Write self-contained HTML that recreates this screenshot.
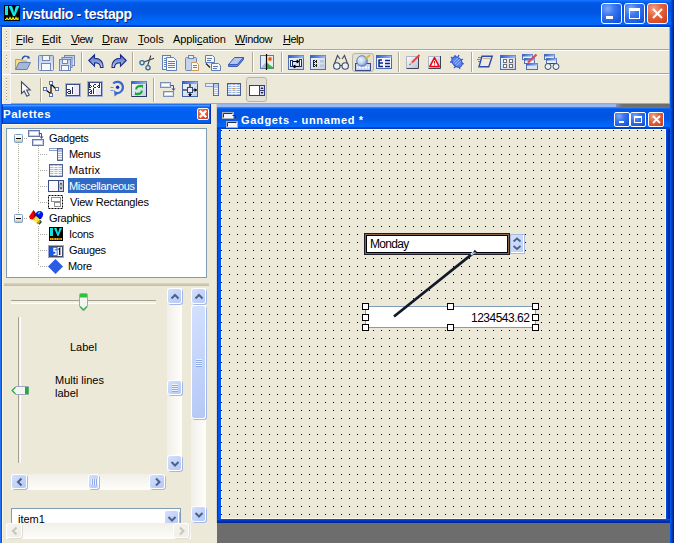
<!DOCTYPE html>
<html><head><meta charset="utf-8">
<style>
*{box-sizing:border-box}
html,body{margin:0;padding:0}
body{width:674px;height:543px;position:relative;overflow:hidden;background:#ECE9D8;font-family:"Liberation Sans",sans-serif;font-size:11px;color:#000}
.a{position:absolute}
svg.a{overflow:visible}
.t{position:absolute;white-space:pre;line-height:13px}
#title{left:0;top:0;width:674px;height:27px;background:linear-gradient(to bottom,#1C74FF 0px,#0A68FA 1.5px,#0058E6 3px,#0054DF 9px,#0056E3 13px,#0062F2 18px,#0068FC 22px,#0064F8 25px,#0044C8 25.5px,#0038B4 27px)}
#ttext{left:22px;top:8px;font-size:14px;letter-spacing:-0.34px;font-weight:bold;color:#fff;text-shadow:1px 1px 0 #0A1F80}
.xpbtn{position:absolute;top:3px;width:21px;height:21px;border:1px solid #fff;border-radius:3px;background:radial-gradient(circle at 30% 25%,#7FA9F8 0,#3A78F0 35%,#1A55E0 80%,#1648C8 100%)}
.xpclose{background:radial-gradient(circle at 30% 25%,#F2A08A 0,#E5633F 40%,#D0441E 85%,#B83A18 100%)}
#lb{left:0;top:26px;width:2px;height:517px;background:linear-gradient(to right,#2070F8 0,#2070F8 1px,#0054E4 1px)}
#rb{left:670px;top:26px;width:4px;height:517px;background:linear-gradient(to right,#0060F4 0,#0050E0 1px,#0038B8 2px,#00208A 4px)}
.grip{position:absolute;left:6px;width:2px;background:repeating-linear-gradient(to bottom,#A09C8C 0,#A09C8C 1px,#FFFFFF 1px,#FFFFFF 2px,transparent 2px,transparent 3px);background-size:1px 3px;background-repeat:repeat-y}
.hl{position:absolute;background:#fff}
.dk{position:absolute;background:#ACA899}
.menu{position:absolute;top:33px}
.menu u{text-decoration:underline;text-underline-offset:1px;text-decoration-thickness:1px}
.sep{position:absolute;width:2px;background:linear-gradient(to right,#ACA899 0,#ACA899 1px,#fff 1px,#fff 2px)}
#palhdr{left:2px;top:104px;width:209px;height:20px;background:linear-gradient(to bottom,#2070F0 0px,#2070F0 1px,#5AA4FF 1px,#3A8CFF 2px,#0A66F4 3px,#0060F0 8px,#005EF2 14px,#0062F8 18px,#0050E0 19px,#0040C8 20px)}
#tree{left:6px;top:128px;width:201px;height:150px;background:#fff;border:1px solid #7F9DB9}
#iw{left:217px;top:104px;width:453px;height:419px;background:linear-gradient(to right,#0038B8 0,#0038B8 1px,#0050E8 1px,#0058EE 4px,#0054EA 449px,#0040D0 450px,#0030B0 451px,#002494 453px)}
#canvas{left:221px;top:129px;width:445px;height:390px;background-color:#ECE9D8}
#mdigray{left:217px;top:523px;width:453px;height:20px;background:#6D6D6D}
.pbtn{position:absolute;background:#E3E1D7;border:1px solid #B9B5A5;border-radius:3px}
.sb{position:absolute;border:1px solid #fff;border-radius:3px;background:linear-gradient(135deg,#D4E0FE 0%,#C4D4FA 50%,#B4C8F6 100%);box-shadow:1px 1px 0 #A4B8E4}
.sbd{position:absolute;border:1px solid #fff;border-radius:3px;background:linear-gradient(135deg,#F4F3EE 0%,#EEEDE6 100%);box-shadow:1px 1px 0 #E0DDD2}
.trv{position:absolute;background:linear-gradient(to right,#F1EFE8,#FEFEFB)}
.trh{position:absolute;background:linear-gradient(to bottom,#F1EFE8,#FEFEFB)}
.sb svg,.sbd svg{position:absolute;left:0;top:0}
</style></head><body>
<div id="title" class="a"></div>
<svg class="a" style="left:4px;top:5px" width="16" height="16" viewBox="0 0 16 16">
 <rect width="16" height="16" fill="#000"/>
 <rect x="1" y="1" width="3" height="9" fill="#10E8E8"/>
 <path d="M5 1h2.5l1 1 1.5 6 1.5-6 1-1h2.5v1l-4 9h-2l-4-9z" fill="#10E8E8"/>
 <path d="M1 14.5h1l1-1.5 1 1.5h1l1-2 1 2h1l1-2 1 2h1l1-2 1 2h1v-2" stroke="#F0F000" stroke-width="1.2" fill="none"/>
</svg>
<div id="ttext" class="t">ivstudio - testapp</div>
<div class="xpbtn" style="left:601px"><div class="a" style="left:4px;top:12px;width:7px;height:3px;background:#fff"></div></div>
<div class="xpbtn" style="left:624px"><div class="a" style="left:4px;top:4px;width:11px;height:11px;border:1px solid #fff;border-top-width:3px"></div></div>
<div class="xpbtn xpclose" style="left:647px"><svg class="a" style="left:4px;top:4px" width="11" height="11"><path d="M1 1l9 9M10 1l-9 9" stroke="#fff" stroke-width="2.2"/></svg></div>
<div id="lb" class="a"></div>
<div class="a" style="left:2px;top:28px;width:1px;height:515px;background:#FFF4D8"></div>
<div id="rb" class="a"></div>
<div class="a" style="left:671px;top:0;width:3px;height:26px;background:linear-gradient(to right,#0050E0,#0030B0 2px,#0028A0)"></div>
<div class="hl" style="left:2px;top:27px;width:667px;height:1px;background:#FFFDF5"></div>
<div class="a" style="left:669px;top:27px;width:1px;height:77px;background:#B4B09E"></div>
<div class="grip" style="top:31px;height:17px"></div>
<div class="hl" style="left:10px;top:28px;width:1px;height:21px;background:#FAF8F0"></div>
<div class="dk" style="left:11px;top:49px;width:659px;height:1px"></div>
<div class="hl" style="left:2px;top:50px;width:667px;height:1px"></div>
<div class="menu t" style="left:16px"><u>F</u>ile</div>
<div class="menu t" style="left:42px"><u>E</u>dit</div>
<div class="menu t" style="left:71px;letter-spacing:-0.6px"><u>V</u>iew</div>
<div class="menu t" style="left:102px"><u>D</u>raw</div>
<div class="menu t" style="left:138px"><u>T</u>ools</div>
<div class="menu t" style="left:173px;letter-spacing:-0.1px">Appli<u>c</u>ation</div>
<div class="menu t" style="left:235px;letter-spacing:-0.35px"><u>W</u>indow</div>
<div class="menu t" style="left:283px;letter-spacing:-0.5px"><u>H</u>elp</div>
<div class="grip" style="top:55px;height:15px"></div>
<div class="hl" style="left:10px;top:51px;width:1px;height:22px;background:#FAF8F0"></div>
<div class="dk" style="left:11px;top:73px;width:659px;height:1px"></div>
<div class="hl" style="left:2px;top:74px;width:667px;height:1px"></div>
<div class="grip" style="top:78px;height:24px"></div>
<div class="hl" style="left:10px;top:75px;width:1px;height:28px;background:#FAF8F0"></div>
<div class="dk" style="left:11px;top:103px;width:659px;height:1px"></div>
<svg width="0" height="0" style="position:absolute"><defs>
<linearGradient id="gFl" x1="0" y1="0" x2="0" y2="1"><stop offset="0" stop-color="#B9C8E8"/><stop offset="1" stop-color="#EEF2FA"/></linearGradient>
<linearGradient id="gAr" x1="0" y1="0" x2="0" y2="1"><stop offset="0" stop-color="#3E62C8"/><stop offset="0.6" stop-color="#8FA4D8"/><stop offset="1" stop-color="#D8DCE4"/></linearGradient>
<linearGradient id="gTb" x1="0" y1="0" x2="1" y2="0"><stop offset="0" stop-color="#2E5FD0"/><stop offset="1" stop-color="#9CBAF4"/></linearGradient>
<linearGradient id="gBx" x1="0" y1="0" x2="1" y2="1"><stop offset="0" stop-color="#FFFFFF"/><stop offset="1" stop-color="#B4BED4"/></linearGradient>
<linearGradient id="gWb" x1="0" y1="0" x2="1" y2="1"><stop offset="0" stop-color="#F4F7FC"/><stop offset="1" stop-color="#C4D0E8"/></linearGradient>
<radialGradient id="gGl" cx="0.4" cy="0.4" r="0.6"><stop offset="0" stop-color="#F0F8FF"/><stop offset="0.6" stop-color="#B8D0F0"/><stop offset="1" stop-color="#7090D0"/></radialGradient>
</defs></svg>
<!-- open -->
<svg class="a" style="left:15px;top:54px" width="16" height="16">
 <path d="M7 5.5C8 2 11 1 13.5 3.5" stroke="#2850B0" stroke-width="1.4" fill="none"/>
 <path d="M12 4.5h3l-1.2-3z" fill="#2850B0"/>
 <path d="M0.5 15.5V5.5h5l1 1.5h5v2" fill="#F6DC82" stroke="#C8A048"/>
 <path d="M0.5 15.5L4 8.5h11.5l-3.5 7z" fill="#A4B6DA" stroke="#6880B4"/>
</svg>
<!-- save -->
<svg class="a" style="left:38px;top:55px" width="16" height="16">
 <rect x="0.5" y="0.5" width="15" height="15" rx="1" fill="url(#gFl)" stroke="#6E87B8"/>
 <rect x="4.5" y="0.5" width="7" height="5" fill="#F4F6FB" stroke="#6E87B8"/>
 <rect x="3.5" y="8.5" width="9" height="7" fill="#F8FAFD" stroke="#6E87B8"/>
</svg>
<!-- save all -->
<svg class="a" style="left:59px;top:55px" width="16" height="16">
 <rect x="5.5" y="0.5" width="10" height="10" fill="url(#gFl)" stroke="#7088B8"/>
 <rect x="3" y="2.5" width="10" height="10" fill="url(#gFl)" stroke="#7088B8"/>
 <rect x="0.5" y="4.5" width="11" height="11" fill="url(#gFl)" stroke="#6E87B8"/>
 <rect x="3.5" y="4.5" width="5" height="4" fill="#F4F6FB" stroke="#6E87B8"/>
 <rect x="2.5" y="10.5" width="7" height="5" fill="#F8FAFD" stroke="#6E87B8"/>
</svg>
<div class="sep" style="left:81px;top:52px;height:20px"></div>
<!-- undo -->
<svg class="a" style="left:88px;top:54px" width="16" height="16">
 <path d="M0.8 6.5L6.5 0.8V4.3C11.5 4.3 15.2 7 15 13.5H12.5C12.5 10.5 10.5 8.8 6.5 8.8V12.2Z" fill="url(#gAr)" stroke="#1A2A8A" stroke-width="1.1"/>
</svg>
<!-- redo -->
<svg class="a" style="left:111px;top:54px" width="16" height="16">
 <path d="M15.2 6.5L9.5 0.8V4.3C4.5 4.3 0.8 7 1 13.5H3.5C3.5 10.5 5.5 8.8 9.5 8.8V12.2Z" fill="url(#gAr)" stroke="#1A2A8A" stroke-width="1.1"/>
</svg>
<div class="sep" style="left:132px;top:52px;height:20px"></div>
<!-- cut -->
<svg class="a" style="left:139px;top:55px" width="16" height="16">
 <path d="M5 7L15 3.2M8.6 10.6L11.8 0.5" stroke="#3A3E52" stroke-width="1.1"/>
 <circle cx="3" cy="7.8" r="2.1" fill="none" stroke="#2C6A98" stroke-width="1.3"/>
 <circle cx="9" cy="12.8" r="2.1" fill="none" stroke="#2C6A98" stroke-width="1.3"/>
</svg>
<!-- copy -->
<svg class="a" style="left:162px;top:55px" width="16" height="16">
 <rect x="0.5" y="0.5" width="8" height="14" fill="#F2F5FB" stroke="#5E7EB8"/>
 <path d="M2 3.5h5M2 5.5h5M2 7.5h5M2 9.5h5M2 11.5h5" stroke="#6E87B8"/>
 <path d="M4.5 2.5h7l3 3v10h-10z" fill="#F8FAFD" stroke="#5E7EB8"/>
 <path d="M6 6.5h7M6 8.5h7M6 10.5h7M6 12.5h7" stroke="#5E7EB8"/>
</svg>
<!-- paste -->
<svg class="a" style="left:185px;top:55px" width="16" height="16">
 <rect x="0.5" y="2.5" width="11" height="13" rx="1" fill="#C9D3E8" stroke="#6E87B8"/>
 <rect x="3.5" y="0.5" width="5" height="3" fill="#E8ECF4" stroke="#6E87B8"/>
 <path d="M6.5 7.5h5l2 2v6h-7z" fill="#FBFCFE" stroke="#D09850"/>
 <path d="M8 10.5h4M8 12.5h4" stroke="#5E7EB8"/>
</svg>
<!-- paste special -->
<svg class="a" style="left:205px;top:55px" width="16" height="16">
 <path d="M0.5 0.5h7l2 2v5h-9z" fill="#F4F6FB" stroke="#5E7EB8"/>
 <path d="M2 3.5h5M2 5.5h4" stroke="#5E7EB8"/>
 <path d="M6.5 8.5h7l2 2v5h-9z" fill="#F4F6FB" stroke="#5E7EB8"/>
 <path d="M8 11.5h5M8 13.5h4" stroke="#5E7EB8"/>
 <path d="M1 8.5l4 4" stroke="#202020" stroke-width="1.2"/>
</svg>
<!-- eraser -->
<svg class="a" style="left:228px;top:55px" width="16" height="16">
 <path d="M0.5 9.5L6.5 2.5H15.5L9.5 9.5Z" fill="#B4C6F0" stroke="#3C5CB8"/>
 <path d="M0.5 9.5V11.5H9.5L15.5 4.5V2.5L9.5 9.5Z" fill="#6A8AD8" stroke="#3C5CB8"/>
</svg>
<div class="sep" style="left:252px;top:52px;height:20px"></div>
<!-- image -->
<svg class="a" style="left:259px;top:54px" width="16" height="16">
 <rect x="1.5" y="1.5" width="13" height="13" fill="#E6ECF8" stroke="#5F78A8"/>
 <path d="M2 14L6 9l4 3 4 2z" fill="#A8B8D8"/>
 <path d="M7.5 14.5V8L10 10.5 14.5 13.5V14.5Z" fill="#3CB43C"/>
 <circle cx="11" cy="5" r="2" fill="#F04830" stroke="#F8C040" stroke-width="0.8"/>
 <path d="M7.5 0V16" stroke="#000" stroke-width="1.2"/>
</svg>
<div class="sep" style="left:281px;top:52px;height:20px"></div>
<!-- window arrows -->
<svg class="a" style="left:288px;top:55px" width="16" height="16">
 <rect x="0.5" y="0.5" width="15" height="14" fill="url(#gWb)" stroke="#5070B0"/>
 <rect x="0.5" y="0.5" width="15" height="2.5" fill="url(#gTb)"/>
 <rect x="2.5" y="5.5" width="2" height="6" fill="#fff" stroke="#203070"/>
 <rect x="11.5" y="4.5" width="2" height="7" fill="#fff" stroke="#203070"/>
 <path d="M5 6.5h4M9 5v3l2-1.5zM11 11.5H7M7 10v3l-2-1.5z" stroke="#000" fill="#000" stroke-width="1"/>
</svg>
<!-- window grid -->
<svg class="a" style="left:310px;top:55px" width="16" height="16">
 <rect x="0.5" y="0.5" width="15" height="14" fill="url(#gWb)" stroke="#5070B0"/>
 <rect x="0.5" y="0.5" width="15" height="2.5" fill="url(#gTb)"/>
 <rect x="3" y="5" width="1" height="1" fill="#202020"/><rect x="3" y="7" width="1" height="1" fill="#202020"/><rect x="3" y="9" width="1" height="1" fill="#202020"/><rect x="3" y="11" width="1" height="1" fill="#202020"/><rect x="4" y="5" width="1" height="1" fill="#202020"/><rect x="4" y="7" width="1" height="1" fill="#202020"/><rect x="4" y="9" width="1" height="1" fill="#202020"/><rect x="4" y="11" width="1" height="1" fill="#202020"/><rect x="6" y="5" width="1" height="1" fill="#202020"/><rect x="6" y="7" width="1" height="1" fill="#202020"/><rect x="6" y="9" width="1" height="1" fill="#202020"/><rect x="6" y="11" width="1" height="1" fill="#202020"/><rect x="3" y="5" width="1" height="7" fill="#202020"/><rect x="5" y="6" width="2" height="1" fill="#202020"/><rect x="5" y="10" width="2" height="1" fill="#202020"/>
 <rect x="10" y="5" width="4" height="2.5" fill="#B8C4DC"/>
 <rect x="10" y="9.5" width="4" height="2.5" fill="#B8C4DC"/>
</svg>
<!-- binoculars -->
<svg class="a" style="left:333px;top:54px" width="16" height="16">
 <path d="M1 11L4.5 1.5 7 5M15 11L11.5 1.5 9 5M6 11.5h4" stroke="#404860" fill="none" stroke-width="1.1"/>
 <circle cx="3.8" cy="12" r="3.2" fill="#E4F4FA" stroke="#404860" stroke-width="1.1"/>
 <circle cx="12.2" cy="12" r="3.2" fill="#E4F4FA" stroke="#404860" stroke-width="1.1"/>
</svg>
<!-- globe pressed -->
<div class="pbtn" style="left:352px;top:53px;width:22px;height:19px"></div>
<svg class="a" style="left:355px;top:55px" width="16" height="16">
 <rect x="0.5" y="8.5" width="15" height="7" fill="#C6D2EC" stroke="#3A4A88"/>
 <path d="M2 12.5h1M4 12.5h2M7 12.5h2M10 12.5h2M13 12.5h1" stroke="#fff" stroke-width="2"/>
 <circle cx="7" cy="6" r="5.3" fill="url(#gGl)" stroke="#6680B8"/>
 <path d="M11 3.5l4-3.5" stroke="#E8B820" stroke-width="2"/>
</svg>
<!-- list window -->
<svg class="a" style="left:376px;top:55px" width="16" height="16">
 <rect x="0.5" y="0.5" width="15" height="13" fill="#F4F7FC" stroke="#4868B0"/>
 <rect x="0.5" y="0.5" width="15" height="2.5" fill="url(#gTb)"/>
 <path d="M3 4.5v7h4M3 8h4M3 5h3M9 5.5h5M9 8.5h5M9 11.5h5" stroke="#10208C" stroke-width="1.5" fill="none"/>
</svg>
<div class="sep" style="left:398px;top:52px;height:20px"></div>
<!-- pencil box -->
<svg class="a" style="left:406px;top:56px" width="16" height="16">
 <rect x="0.5" y="0.5" width="12" height="12" fill="url(#gBx)"/>
 <path d="M0.5 12V0.5H12" stroke="#B0B6C6" fill="none"/>
 <path d="M0.5 12.5H12.5V0" stroke="#3A4258" fill="none"/>
 <path d="M6 6.5L13.5 -1" stroke="#F04040" stroke-width="2"/>
 <path d="M4.2 8.3l1.4-1.4" stroke="#E0B060" stroke-width="1.6"/>
 <path d="M3.6 8.9l0.6-0.6" stroke="#602020" stroke-width="1.2"/>
</svg>
<!-- warning -->
<svg class="a" style="left:428px;top:56px" width="16" height="16">
 <rect x="0.5" y="0.5" width="12" height="12" fill="url(#gBx)"/>
 <path d="M0.5 12V0.5H12" stroke="#B0B6C6" fill="none"/>
 <path d="M0.5 12.5H12.5V0" stroke="#3A4258" fill="none"/>
 <path d="M6.5 1.6L11.2 10.6H1.8Z" fill="#fff" stroke="#F00010" stroke-width="1.5" stroke-linejoin="round"/>
 <path d="M6.5 5v2.6" stroke="#F00010" stroke-width="1"/>
 <rect x="6" y="8.4" width="1" height="1" fill="#F00010"/>
</svg>
<!-- bug -->
<svg class="a" style="left:449px;top:54px" width="16" height="16">
 <path d="M2 3l2 2M1 8h3M5 14l2-2M10 1l-1 2M14 5l-2 1M15 10l-3-1M11 15l-1-3M6 1v3" stroke="#2A58D8" stroke-width="1.3"/>
 <ellipse cx="8" cy="8" rx="6" ry="4.3" transform="rotate(45 8 8)" fill="#5C84EC" stroke="#2A50C8"/>
 <path d="M4.5 8.5l5-5M6 10l5-5M7.5 11.5l4-4" stroke="#A8C0F8" stroke-width="0.8"/>
</svg>
<div class="sep" style="left:471px;top:52px;height:20px"></div>
<!-- skew doc -->
<svg class="a" style="left:477px;top:54px" width="16" height="16">
 <path d="M1 3.5h3M0 5.5h3M1 7.5h2" stroke="#707890" stroke-width="0.9"/>
 <path d="M5 2.2H15.2L11.8 12.8H2Z" fill="#F2ECDC" stroke="#2A4CB0" stroke-width="1.4"/>
 <path d="M6 4.5h7" stroke="#C8B090" stroke-width="1"/>
</svg>
<!-- grid window -->
<svg class="a" style="left:500px;top:55px" width="16" height="16">
 <rect x="0.5" y="0.5" width="15" height="14" fill="url(#gWb)" stroke="#5070B0"/>
 <rect x="0.5" y="0.5" width="15" height="2.5" fill="url(#gTb)"/>
 <rect x="3.5" y="4.5" width="3" height="3" fill="#fff" stroke="#707070"/>
 <rect x="9.5" y="4.5" width="3" height="3" fill="#fff" stroke="#707070"/>
 <rect x="3.5" y="9.5" width="3" height="3" fill="#fff" stroke="#707070"/>
 <rect x="9.5" y="9.5" width="3" height="3" fill="#fff" stroke="#707070"/>
</svg>
<!-- stack pencil -->
<svg class="a" style="left:522px;top:54px" width="16" height="16">
 <rect x="0.5" y="0.5" width="10" height="5" fill="#E8EEF8" stroke="#5070B0"/><rect x="0.5" y="0.5" width="10" height="2" fill="url(#gTb)"/>
 <rect x="2.5" y="4.5" width="10" height="5" fill="#E8EEF8" stroke="#5070B0"/><rect x="2.5" y="4.5" width="10" height="2" fill="url(#gTb)"/>
 <rect x="4.5" y="9.5" width="11" height="6" fill="#DCE4F2" stroke="#5070B0"/><rect x="4.5" y="9.5" width="11" height="2" fill="url(#gTb)"/>
 <path d="M6 8.5L14.5 0.5" stroke="#E84848" stroke-width="2.4"/>
</svg>
<!-- stack binoculars -->
<svg class="a" style="left:544px;top:54px" width="16" height="16">
 <rect x="0.5" y="0.5" width="10" height="5" fill="#E8EEF8" stroke="#5070B0"/><rect x="0.5" y="0.5" width="10" height="2" fill="url(#gTb)"/>
 <rect x="2.5" y="4.5" width="10" height="5" fill="#E8EEF8" stroke="#5070B0"/><rect x="2.5" y="4.5" width="10" height="2" fill="url(#gTb)"/>
 <path d="M5 9.5h6" stroke="#404860"/>
 <circle cx="4" cy="12.5" r="3" fill="#E4F4FA" stroke="#404860"/>
 <circle cx="12" cy="12.5" r="3" fill="#E4F4FA" stroke="#404860"/>
</svg>
<!-- arrow -->
<svg class="a" style="left:20px;top:81px" width="16" height="16">
 <path d="M1.5 0.8V12.5L4.2 10L6.8 15.2L9.2 14L6.6 9H10.2Z" fill="#fff" stroke="#404C6C" stroke-width="1.1"/>
</svg>
<div class="sep" style="left:40px;top:78px;height:24px"></div>
<!-- node -->
<svg class="a" style="left:43px;top:81px" width="16" height="16">
 <path d="M8 3v10M3 9l5 4M8 3l5 5" stroke="#000" stroke-width="1.2"/>
 <rect x="6.5" y="0.5" width="3" height="3" fill="#fff" stroke="#5870B0"/>
 <rect x="0.5" y="6.5" width="3" height="3" fill="#fff" stroke="#5870B0"/>
 <rect x="12.5" y="6.5" width="3" height="3" fill="#fff" stroke="#5870B0"/>
 <rect x="6.5" y="12.5" width="3" height="3" fill="#fff" stroke="#5870B0"/>
</svg>
<!-- al -->
<svg class="a" style="left:65px;top:83px" width="16" height="16"><rect x="0.5" y="0.5" width="15" height="13" fill="#E8ECF6" stroke="#A4B2D2"/><rect x="1.5" y="1.5" width="13" height="11" fill="#FCFCFF" stroke="#3C4C84"/><rect x="9" y="2" width="5" height="10" fill="#ECE8F8"/><rect x="2" y="6" width="1" height="1" fill="#243054"/><rect x="3" y="6" width="1" height="1" fill="#243054"/><rect x="4" y="6" width="1" height="1" fill="#243054"/><rect x="5" y="7" width="1" height="1" fill="#243054"/><rect x="3" y="8" width="1" height="1" fill="#243054"/><rect x="4" y="8" width="1" height="1" fill="#243054"/><rect x="5" y="8" width="1" height="1" fill="#243054"/><rect x="2" y="9" width="1" height="1" fill="#243054"/><rect x="5" y="9" width="1" height="1" fill="#243054"/><rect x="3" y="10" width="1" height="1" fill="#243054"/><rect x="4" y="10" width="1" height="1" fill="#243054"/><rect x="5" y="10" width="1" height="1" fill="#243054"/><rect x="7" y="4" width="1" height="1" fill="#243054"/><rect x="7" y="5" width="1" height="1" fill="#243054"/><rect x="7" y="6" width="1" height="1" fill="#243054"/><rect x="7" y="7" width="1" height="1" fill="#243054"/><rect x="7" y="8" width="1" height="1" fill="#243054"/><rect x="7" y="9" width="1" height="1" fill="#243054"/><rect x="7" y="10" width="1" height="1" fill="#243054"/></svg>
<!-- abc al -->
<svg class="a" style="left:87px;top:81px" width="16" height="16"><rect x="0.5" y="0.5" width="15" height="15" fill="#E8ECF6" stroke="#A4B2D2"/><rect x="1.5" y="1.5" width="13" height="13" fill="#FCFCFF" stroke="#3C4C84"/><rect x="9" y="8" width="5" height="6" fill="#ECE8F8"/><rect x="2" y="2" width="1" height="1" fill="#243054"/><rect x="2" y="3" width="1" height="1" fill="#243054"/><rect x="2" y="4" width="1" height="1" fill="#243054"/><rect x="3" y="4" width="1" height="1" fill="#243054"/><rect x="2" y="5" width="1" height="1" fill="#243054"/><rect x="4" y="5" width="1" height="1" fill="#243054"/><rect x="2" y="6" width="1" height="1" fill="#243054"/><rect x="3" y="6" width="1" height="1" fill="#243054"/><rect x="7" y="3" width="1" height="1" fill="#243054"/><rect x="8" y="3" width="1" height="1" fill="#243054"/><rect x="6" y="4" width="1" height="1" fill="#243054"/><rect x="6" y="5" width="1" height="1" fill="#243054"/><rect x="7" y="6" width="1" height="1" fill="#243054"/><rect x="8" y="6" width="1" height="1" fill="#243054"/><rect x="12" y="2" width="1" height="1" fill="#243054"/><rect x="12" y="3" width="1" height="1" fill="#243054"/><rect x="11" y="4" width="1" height="1" fill="#243054"/><rect x="12" y="4" width="1" height="1" fill="#243054"/><rect x="10" y="5" width="1" height="1" fill="#243054"/><rect x="12" y="5" width="1" height="1" fill="#243054"/><rect x="11" y="6" width="1" height="1" fill="#243054"/><rect x="12" y="6" width="1" height="1" fill="#243054"/><rect x="2" y="8" width="1" height="1" fill="#243054"/><rect x="3" y="8" width="1" height="1" fill="#243054"/><rect x="4" y="9" width="1" height="1" fill="#243054"/><rect x="3" y="10" width="1" height="1" fill="#243054"/><rect x="4" y="10" width="1" height="1" fill="#243054"/><rect x="2" y="11" width="1" height="1" fill="#243054"/><rect x="4" y="11" width="1" height="1" fill="#243054"/><rect x="3" y="12" width="1" height="1" fill="#243054"/><rect x="4" y="12" width="1" height="1" fill="#243054"/><rect x="6" y="7" width="1" height="1" fill="#243054"/><rect x="6" y="8" width="1" height="1" fill="#243054"/><rect x="6" y="9" width="1" height="1" fill="#243054"/><rect x="6" y="10" width="1" height="1" fill="#243054"/><rect x="6" y="11" width="1" height="1" fill="#243054"/><rect x="6" y="12" width="1" height="1" fill="#243054"/></svg>
<!-- rotate -->
<svg class="a" style="left:109px;top:81px" width="16" height="16">
 <path d="M4.2 2.6A5.6 5.6 0 1 1 7.2 11.9" stroke="#3868D8" stroke-width="2.2" fill="none"/>
 <path d="M5 9.2L9.2 12.6 5.6 15.6z" fill="#3868D8"/>
 <circle cx="8.6" cy="6.2" r="1.7" fill="#1C3090"/>
 <path d="M1.5 6.5h3M1.5 9.5h3" stroke="#6A90E0" stroke-width="1"/>
</svg>
<!-- refresh window -->
<svg class="a" style="left:131px;top:81px" width="16" height="16">
 <rect x="0.5" y="0.5" width="15" height="15" fill="url(#gWb)" stroke="#5070B0"/>
 <path d="M15.5 1v15M1 15.5h15" stroke="#283868"/>
 <rect x="0.5" y="0.5" width="15" height="2.5" fill="url(#gTb)"/>
 <path d="M5.2 8.5A3.2 3.2 0 0 1 10 5.6" stroke="#10A820" stroke-width="2" fill="none"/>
 <path d="M8.8 3.8L12.2 4 11.6 7.6z" fill="#10A820"/>
 <path d="M10.8 9.5A3.2 3.2 0 0 1 6 12.4" stroke="#10A820" stroke-width="2" fill="none"/>
 <path d="M7.2 14.2L3.8 14 4.4 10.4z" fill="#10A820"/>
</svg>
<div class="sep" style="left:153px;top:78px;height:24px"></div>
<!-- gadget -->
<svg class="a" style="left:160px;top:81px" width="16" height="16">
 <rect x="0.5" y="1.5" width="10" height="5" fill="#F2F5FB" stroke="#7A90B8" stroke-width="1"/>
 <rect x="1.5" y="2.5" width="8" height="3" fill="#fff" stroke="#B8C4DC" stroke-width="0.6"/>
 <rect x="3.5" y="10.5" width="10" height="5" fill="#F2F5FB" stroke="#7A90B8"/>
 <rect x="4.5" y="11.5" width="8" height="3" fill="#fff" stroke="#B8C4DC" stroke-width="0.6"/>
 <path d="M10.5 4.5h3v4" stroke="#44506C" fill="none"/>
 <path d="M11.5 7.5h4l-2 2.5z" fill="#3858A8"/>
</svg>
<!-- crosshair window -->
<svg class="a" style="left:182px;top:81px" width="16" height="16">
 <rect x="0.5" y="0.5" width="15" height="15" fill="url(#gWb)" stroke="#4060A8"/>
 <rect x="0.5" y="0.5" width="15" height="2.5" fill="url(#gTb)"/>
 <path d="M1 9h14M8 3v12" stroke="#000" stroke-width="1.2"/>
 <path d="M15 9l-2.5-2v4zM8 15.5l-2-2.5h4z" fill="#000"/>
 <rect x="5.5" y="6.5" width="5" height="5" fill="#E8EEF8" stroke="#304878"/>
</svg>
<!-- menu -->
<svg class="a" style="left:205px;top:83px" width="16" height="16">
 <rect x="0.5" y="0.5" width="13" height="3" fill="#E4EAF6" stroke="#8C9CC0"/>
 <rect x="8.5" y="0.5" width="5" height="12" fill="#B8C8E8" stroke="#5A6C98"/>
 <path d="M9 5.5h4M9 7.5h4M9 9.5h4M9 11.5h4" stroke="#F4F6FC"/>
</svg>
<!-- matrix -->
<svg class="a" style="left:227px;top:83px" width="16" height="16">
 <rect x="0.5" y="0.5" width="13" height="12" fill="#9CB0DC" stroke="#4C5E8C"/>
 <path d="M1 2.5h12M1 4.5h12M1 6.5h12M1 8.5h12M1 10.5h12M5 1v11M9 1v11" stroke="#F4F7FE"/>
 <rect x="5.5" y="5" width="3" height="1.2" fill="#E89810"/>
</svg>
<!-- misc pressed -->
<div class="pbtn" style="left:246px;top:77px;width:21px;height:25px"></div>
<svg class="a" style="left:249px;top:85px" width="16" height="16">
 <rect x="0.5" y="0.5" width="15" height="10" fill="#F0F0FA" stroke="#2C3C88"/>
 <rect x="1" y="1" width="9" height="9" fill="#fff"/>
 <path d="M10.5 0.5v10M10.5 5.5h5" stroke="#2C3C88"/>
 <rect x="11" y="1" width="4" height="4" fill="#D8DCE8"/><rect x="11" y="6" width="4" height="4" fill="#D8DCE8"/>
 <path d="M11.5 4h3l-1.5-2zM11.5 7h3l-1.5 2z" fill="#202020"/>
</svg>
<div id="palhdr" class="a"></div>
<div class="a" style="left:2px;top:105px;width:1px;height:19px;background:#0038C0"></div>
<div class="a" style="left:3px;top:124px;width:208px;height:1px;background:#FFF6E0"></div>
<div class="t" style="left:3px;top:108px;font-size:11.5px;font-weight:bold;color:#fff;letter-spacing:0.5px">Palettes</div>
<div class="a" style="left:210px;top:104px;width:1px;height:20px;background:#0030B8"></div>
<div class="a" style="left:197px;top:108px;width:12px;height:12px;border:1px solid #fff;border-radius:2px;background:radial-gradient(circle at 35% 30%,#F08060,#D84A20 70%,#C03C14)"><svg class="a" style="left:0;top:0" width="10" height="10"><path d="M1.8 1.8l6.4 6.4M8.2 1.8l-6.4 6.4" stroke="#fff" stroke-width="2.3"/></svg></div>
<div id="tree" class="a"></div>
<svg class="a" style="left:0;top:0" width="210" height="280">
 <defs>
  <pattern id="dv" x="0" y="0" width="1" height="2" patternUnits="userSpaceOnUse"><rect width="1" height="1" fill="#A8A8A0"/></pattern>
  <pattern id="dh" x="0" y="0" width="2" height="1" patternUnits="userSpaceOnUse"><rect width="1" height="1" fill="#A8A8A0"/></pattern>
  <linearGradient id="gPm" x1="0" y1="0" x2="0" y2="1"><stop offset="0" stop-color="#FFFFFF"/><stop offset="0.5" stop-color="#F4F1E6"/><stop offset="1" stop-color="#C8C0A4"/></linearGradient>
 </defs>
 <rect x="18" y="143" width="1" height="71" fill="url(#dv)"/>
 <rect x="23" y="138" width="4" height="1" fill="url(#dh)"/>
 <rect x="23" y="218" width="4" height="1" fill="url(#dh)"/>
 <rect x="38" y="146" width="1" height="56" fill="url(#dv)"/>
 <rect x="38" y="226" width="1" height="40" fill="url(#dv)"/>
 <rect x="39" y="154" width="9" height="1" fill="url(#dh)"/>
 <rect x="39" y="170" width="9" height="1" fill="url(#dh)"/>
 <rect x="39" y="186" width="9" height="1" fill="url(#dh)"/>
 <rect x="39" y="202" width="9" height="1" fill="url(#dh)"/>
 <rect x="39" y="234" width="9" height="1" fill="url(#dh)"/>
 <rect x="39" y="250" width="9" height="1" fill="url(#dh)"/>
 <rect x="39" y="266" width="9" height="1" fill="url(#dh)"/>
 <rect x="14.5" y="134.5" width="8" height="8" rx="1" fill="url(#gPm)" stroke="#7C9EC0"/>
 <path d="M16 138.5h5" stroke="#000"/>
 <rect x="14.5" y="214.5" width="8" height="8" rx="1" fill="url(#gPm)" stroke="#7C9EC0"/>
 <path d="M16 218.5h5" stroke="#000"/>
 <!-- gadgets icon -->
 <g transform="translate(28,130)">
  <rect x="0.5" y="0.5" width="11" height="6" fill="#E8ECF6" stroke="#6878A8"/>
  <rect x="1.5" y="1.5" width="9" height="4" fill="#fff" stroke="#B8C4E0" stroke-width="0.8"/>
  <rect x="4.5" y="9.5" width="11" height="6" fill="#E8ECF6" stroke="#6878A8"/>
  <rect x="5.5" y="10.5" width="9" height="4" fill="#fff" stroke="#B8C4E0" stroke-width="0.8"/>
  <path d="M11 3.5h2.5v4" stroke="#44506C" fill="none"/>
  <path d="M11.5 6.5h4l-2 2.5z" fill="#3858A8"/>
 </g>
 <!-- menus icon -->
 <g transform="translate(49,148)">
  <rect x="0.5" y="0.5" width="13" height="2" fill="#F4F6FC" stroke="#8CA0C8"/>
  <rect x="8.5" y="0.5" width="5" height="12" fill="#A8BCE0" stroke="#50648C"/>
  <path d="M9 4.5h4M9 6.5h4M9 8.5h4M9 10.5h4" stroke="#F4F6FC"/>
 </g>
 <!-- matrix icon -->
 <g transform="translate(49,164)">
  <rect x="0.5" y="0.5" width="13" height="12" fill="#A8BCE0" stroke="#50648C"/>
  <path d="M1 2.5h12M1 4.5h12M1 6.5h12M1 8.5h12M1 10.5h12M5 1v11M9 1v11" stroke="#F8FAFE"/>
  <rect x="5.5" y="5" width="3" height="1" fill="#E89810"/>
 </g>
 <!-- misc icon -->
 <g transform="translate(48,180)">
  <rect x="0.5" y="0.5" width="15" height="11" fill="#F0F0F8" stroke="#3C4C80"/>
  <rect x="1" y="1" width="9" height="10" fill="#FAFAFF"/>
  <path d="M10.5 0.5v11M10.5 6h5" stroke="#3C4C80"/>
  <rect x="11" y="1" width="4" height="4.5" fill="#D0D4E0"/><rect x="11" y="6.5" width="4" height="4.5" fill="#D0D4E0"/>
  <path d="M11.5 4.5h3l-1.5-2zM11.5 7.5h3l-1.5 2z" fill="#303030"/>
 </g>
 <!-- view rect icon -->
 <g transform="translate(48,195)">
  <rect x="0.5" y="0.5" width="14" height="13" fill="#fff" stroke="#000" stroke-dasharray="2 1"/>
  <rect x="3.5" y="2.5" width="9" height="4" fill="#fff" stroke="#909090"/>
  <rect x="6.5" y="7.5" width="6" height="4" fill="#fff" stroke="#909090"/>
 </g>
 <!-- graphics icon -->
 <g transform="translate(28,210)">
  <path d="M1 6.5L5.5 0 10 7 6 10 2 9z" fill="#F00000"/>
  <path d="M5.5 0L10 7 6 10z" fill="#900000"/>
  <circle cx="11.5" cy="4.6" r="3.6" fill="#0010F0"/>
  <path d="M13.5 7.5A3.6 3.6 0 0 1 9 8" stroke="#000080" stroke-width="1.2" fill="none"/>
  <path d="M10 4l2-2" stroke="#20E0FF" stroke-width="1.4"/>
  <path d="M8.5 12.5L11.5 14.8 14 12 12 9.5z" fill="#202020" opacity="0.85"/>
  <path d="M4.5 10L8 6 12 9.5 8.5 13z" fill="#F8F040"/>
  <path d="M8.5 13L12 9.5 12.2 12 9.5 14.5z" fill="#C8A020"/>
  <path d="M4.5 10L8.5 13 9.5 14.5 5.5 12z" fill="#F0F0F0"/>
  <path d="M6 9.5h1M8 8h1M9 10h1" stroke="#B0B0B8" stroke-width="0.8"/>
 </g>
 <!-- icons icon -->
 <g transform="translate(49,227)">
  <rect width="14" height="14" fill="#000"/>
  <rect x="1" y="1" width="3" height="8" fill="#10E0E0"/>
  <path d="M5 1h2.5l1.5 5 1.5-5H13l-3.5 8h-1z" fill="#10E0E0"/>
  <path d="M1 11h12v2H1z" fill="#F0B000"/>
  <path d="M2 12h1M4 12h2M7 12h1M9 12h3" stroke="#000" stroke-width="0.6"/>
 </g>
 <!-- gauges icon -->
 <g transform="translate(48,245)">
  <rect x="0.5" y="0.5" width="15" height="12" fill="#C8D2E6" stroke="#98A8C8"/>
  <rect x="1.5" y="1.5" width="13" height="10" fill="#F4F4FC" stroke="#404C68"/>
  <rect x="2" y="2" width="7.5" height="9" fill="#1A5AEA"/>
  <path d="M8.5 3.5h-2.5v2.5h2v3.5h-2.5" stroke="#fff" stroke-width="1.4" fill="none"/>
  <path d="M10.5 4.5l1.2-1v6.5" stroke="#101828" stroke-width="1.3" fill="none"/>
 </g>
 <!-- more icon -->
 <path d="M55.5 259L63 266.5 55.5 274 48 266.5z" fill="#2A5CE4"/>
</svg>
<div class="t" style="left:49px;top:132px;letter-spacing:-0.3px">Gadgets</div>
<div class="t" style="left:69px;top:148px;letter-spacing:-0.3px">Menus</div>
<div class="t" style="left:69px;top:164px;letter-spacing:0.2px">Matrix</div>
<div class="a" style="left:68px;top:178px;width:69px;height:15px;background:#316AC5"></div>
<div class="t" style="left:69px;top:180px;letter-spacing:-0.3px;color:#fff">Miscellaneous</div>
<div class="t" style="left:70px;top:196px;letter-spacing:-0.2px">View Rectangles</div>
<div class="t" style="left:49px;top:212px;letter-spacing:-0.3px">Graphics</div>
<div class="t" style="left:69px;top:228px;letter-spacing:-0.3px">Icons</div>
<div class="t" style="left:69px;top:244px;letter-spacing:-0.3px">Gauges</div>
<div class="t" style="left:68px;top:260px;letter-spacing:-0.3px">More</div>
<!-- splitter -->
<div class="a" style="left:4px;top:283px;width:205px;height:3px;background:linear-gradient(to bottom,#DCD8C6,#CCC8B4 50%,#BFBBA6)"></div>
<!-- horizontal slider -->
<div class="a" style="left:11px;top:300px;width:145px;height:1px;background:#A3A08E;border-radius:1px"></div>
<div class="a" style="left:11px;top:301px;width:145px;height:2px;background:#F2F0E6"></div>
<div class="a" style="left:11px;top:303px;width:145px;height:1px;background:#FFFFFF"></div>
<svg class="a" style="left:79px;top:293px" width="9" height="19">
 <path d="M0.5 1.5Q0.5 0.5 1.5 0.5H7.5Q8.5 0.5 8.5 1.5V13.5L4.5 18L0.5 13.5Z" fill="#F4F4F2" stroke="#9CAAB8"/>
 <rect x="1" y="1" width="7" height="3.5" fill="#30C040"/>
 <path d="M1.2 13.5L4.5 17M7.8 13.5L4.5 17" stroke="#30B040" stroke-width="1.2"/>
</svg>
<!-- vertical slider -->
<div class="a" style="left:18px;top:317px;width:1px;height:146px;background:#A3A08E;border-radius:1px"></div>
<div class="a" style="left:19px;top:317px;width:1px;height:146px;background:#F2F0E6"></div>
<div class="a" style="left:20px;top:317px;width:1px;height:146px;background:#FFFFFF"></div>
<svg class="a" style="left:11px;top:386px" width="18" height="9">
 <path d="M17.5 0.5V8.5H5L0.5 4.5L5 0.5Z" fill="#F4F4F2" stroke="#9CAAB8"/>
 <rect x="14" y="1" width="3.5" height="7" fill="#20B030"/>
 <path d="M4.5 1.2L1.2 4.5M4.5 7.8L1.2 4.5" stroke="#30B040" stroke-width="1.2"/>
</svg>
<!-- labels -->
<div class="t" style="left:70px;top:341px">Label</div>
<div class="t" style="left:55px;top:374px">Multi lines
label</div>
<!-- inner v scrollbar -->
<div class="trv" style="left:167px;top:288px;width:15px;height:184px"></div>
<div class="sb" style="left:167px;top:288px;width:15px;height:16px"><svg width="15" height="16"><path d="M3.5 9.5L7 6 10.5 9.5" stroke="#4D6185" stroke-width="2" fill="none"/></svg></div>
<div class="sb" style="left:167px;top:380px;width:15px;height:15px"><svg width="15" height="15"><path d="M4 3.5h6M4 5.5h6M4 7.5h6M4 9.5h6" stroke="#EEF3FE"/><path d="M4 4.5h6M4 6.5h6M4 8.5h6M4 10.5h6" stroke="#8CA8E8"/></svg></div>
<div class="sb" style="left:167px;top:455px;width:15px;height:16px"><svg width="15" height="16"><path d="M3.5 6L7 9.5 10.5 6" stroke="#4D6185" stroke-width="2" fill="none"/></svg></div>
<!-- inner h scrollbar -->
<div class="trh" style="left:11px;top:474px;width:155px;height:16px"></div>
<div class="sb" style="left:11px;top:474px;width:16px;height:15px"><svg width="16" height="15"><path d="M9.5 3.5L6 7 9.5 10.5" stroke="#4D6185" stroke-width="2" fill="none"/></svg></div>
<div class="sb" style="left:88px;top:474px;width:11px;height:15px"><svg width="11" height="15"><path d="M2.5 4v6M4.5 4v6M6.5 4v6M8.5 4v6" stroke="#EEF3FE"/><path d="M3.5 4v6M5.5 4v6M7.5 4v6" stroke="#8CA8E8"/></svg></div>
<div class="sb" style="left:149px;top:474px;width:16px;height:15px"><svg width="16" height="15"><path d="M6 3.5L9.5 7 6 10.5" stroke="#4D6185" stroke-width="2" fill="none"/></svg></div>
<!-- combo -->
<div class="a" style="left:11px;top:508px;width:170px;height:20px;background:#fff;border:1px solid #7F9DB9"></div>
<div class="sb" style="left:164px;top:510px;width:15px;height:16px"><svg width="15" height="16"><path d="M3.5 6L7 9.5 10.5 6" stroke="#4D6185" stroke-width="2" fill="none"/></svg></div>
<div class="t" style="left:18px;top:513px">item1</div>
<!-- outer v scrollbar -->
<div class="trv" style="left:191px;top:288px;width:15px;height:235px"></div>
<div class="sb" style="left:191px;top:288px;width:15px;height:16px"><svg width="15" height="16"><path d="M3.5 9.5L7 6 10.5 9.5" stroke="#4D6185" stroke-width="2" fill="none"/></svg></div>
<div class="sb" style="left:191px;top:305px;width:15px;height:114px"><svg width="15" height="114"><path d="M4 53.5h6M4 55.5h6M4 57.5h6M4 59.5h6" stroke="#EEF3FE"/><path d="M4 54.5h6M4 56.5h6M4 58.5h6M4 60.5h6" stroke="#8CA8E8"/></svg></div>
<div class="sb" style="left:191px;top:506px;width:15px;height:16px"><svg width="15" height="16"><path d="M3.5 6L7 9.5 10.5 6" stroke="#4D6185" stroke-width="2" fill="none"/></svg></div>
<!-- outer h scrollbar (disabled) -->
<div class="trh" style="left:6px;top:523px;width:185px;height:16px"></div>
<div class="sbd" style="left:6px;top:523px;width:16px;height:15px"><svg width="16" height="15"><path d="M9.5 3.5L6 7 9.5 10.5" stroke="#C9C6BA" stroke-width="2" fill="none"/></svg></div>
<div class="sbd" style="left:173px;top:523px;width:16px;height:15px"><svg width="16" height="15"><path d="M6 3.5L9.5 7 6 10.5" stroke="#C9C6BA" stroke-width="2" fill="none"/></svg></div>
<div id="iw" class="a"></div>
<div class="a" style="left:216px;top:104px;width:1px;height:419px;background:#D8D4C4"></div>
<div class="a" style="left:217px;top:104px;width:453px;height:25px;background:linear-gradient(to bottom,#98B0EC 0px,#A4BCF2 2px,#98B4F0 3px,#3090FF 3px,#1A78FA 4px,#0058E8 5px,#0054E4 10px,#0056E6 15px,#0060F2 18px,#0068FC 21px,#0066FA 23px,#0048D4 23px,#003CC0 25px)"></div>
<div class="a" style="left:616px;top:104px;width:54px;height:3px;background:linear-gradient(to right,#9090C8,#707070 6px,#6D6D6D)"></div>
<div class="a" style="left:217px;top:519px;width:453px;height:4px;background:linear-gradient(to bottom,#0054EC 0,#0050E6 1px,#0040D0 1px,#0030B0 2px,#002494 4px)"></div>
<div id="canvas" class="a"></div>
<svg class="a" style="left:221px;top:129px" width="445" height="390"><defs><pattern id="dp" x="0" y="1" width="8" height="8" patternUnits="userSpaceOnUse"><rect width="1" height="1" fill="#000"/></pattern></defs><rect x="0" y="0" width="445" height="1" fill="#FFF8E8"/><rect x="0" y="0" width="1" height="390" fill="#FFF8E8"/><rect x="444" y="0" width="1" height="390" fill="#FFF8E8"/><rect x="0" y="389" width="445" height="1" fill="#FFF8E8"/><rect width="445" height="390" fill="url(#dp)"/></svg>
<!-- window icon -->
<svg class="a" style="left:222px;top:112px" width="16" height="16">
  <rect x="0.5" y="0.5" width="11" height="6" fill="#F4F4FC" stroke="#A8B0C0"/>
  <path d="M1.5 5.5v-4h9" stroke="#283048" fill="none"/>
  <rect x="4.5" y="9.5" width="11" height="6" fill="#F4F4FC" stroke="#A8B0C0"/>
  <path d="M5.5 14.5v-4h9" stroke="#283048" fill="none"/>
  <path d="M10.5 3.5h3v4" stroke="#283048" fill="none"/>
  <path d="M11 6.5h5l-2.5 2.5z" fill="#505868"/>
</svg>
<div class="t" style="left:241px;top:114px;font-size:11px;font-weight:bold;color:#fff;letter-spacing:0.67px">Gadgets - unnamed *</div>
<!-- buttons -->
<div class="xpbtn" style="left:614px;top:112px;width:16px;height:15px;border-radius:2px"><div class="a" style="left:4px;top:8px;width:5px;height:2px;background:#fff"></div></div>
<div class="xpbtn" style="left:630px;top:112px;width:16px;height:15px;border-radius:2px"><div class="a" style="left:3px;top:3px;width:8px;height:7px;border:1px solid #fff;border-top-width:2px"></div></div>
<div class="xpbtn xpclose" style="left:648px;top:112px;width:16px;height:15px;border-radius:2px"><svg class="a" style="left:3px;top:2px" width="9" height="9"><path d="M1 1l7 7M8 1l-7 7" stroke="#fff" stroke-width="1.8"/></svg></div>
<div id="mdigray" class="a"></div>
<!-- Monday field -->
<div class="a" style="left:364px;top:233px;width:146px;height:22px;background:#fff;border:1px solid #1E1E2E;box-shadow:inset 0 0 0 1px #8A6440,inset 0 0 0 2px #000"></div>
<div class="t" style="left:370px;top:238px;font-size:12px;letter-spacing:-0.7px">Monday</div>
<div class="a" style="left:510px;top:234px;width:15px;height:20px;border:1px solid #A8BCDC;background:#fff"></div>
<div class="a" style="left:511px;top:235px;width:12px;height:17px;background:linear-gradient(135deg,#D4E0FE,#BCCEF8)"></div>
<svg class="a" style="left:511px;top:235px" width="13" height="18"><path d="M2.5 6.5L6 3.5 9.5 6.5M2.5 11L6 14 9.5 11" stroke="#4D6185" stroke-width="1.8" fill="none"/></svg>
<!-- numeric field -->
<div class="a" style="left:365px;top:306px;width:171px;height:22px;background:#fff;border:1px solid #7F9DB9"></div>
<div class="t" style="left:471px;top:312px;font-size:12px;letter-spacing:-0.5px">1234543.62</div>
<!-- link line -->
<svg class="a" style="left:380px;top:240px" width="110" height="90">
 <path d="M14 76.5L92.6 13.6" stroke="#10182A" stroke-width="2.7"/>
 <path d="M91 14.6L95.2 11.2" stroke="#E8F0FC" stroke-width="2.4"/>
 <path d="M91.8 14.2L94.8 11.6" stroke="#90B0E0" stroke-width="1.2"/>
 <path d="M93 12.5L94.8 9.8 97 12z" fill="#10182A"/>
</svg>
<!-- handles -->
<div class="a" style="left:362px;top:303px;width:7px;height:7px;background:#fff;border:1px solid #000"></div>
<div class="a" style="left:447px;top:303px;width:7px;height:7px;background:#fff;border:1px solid #000"></div>
<div class="a" style="left:532px;top:303px;width:7px;height:7px;background:#fff;border:1px solid #000"></div>
<div class="a" style="left:362px;top:314px;width:7px;height:7px;background:#fff;border:1px solid #000"></div>
<div class="a" style="left:532px;top:314px;width:7px;height:7px;background:#fff;border:1px solid #000"></div>
<div class="a" style="left:362px;top:324px;width:7px;height:7px;background:#fff;border:1px solid #000"></div>
<div class="a" style="left:447px;top:324px;width:7px;height:7px;background:#fff;border:1px solid #000"></div>
<div class="a" style="left:532px;top:324px;width:7px;height:7px;background:#fff;border:1px solid #000"></div>
</body></html>
